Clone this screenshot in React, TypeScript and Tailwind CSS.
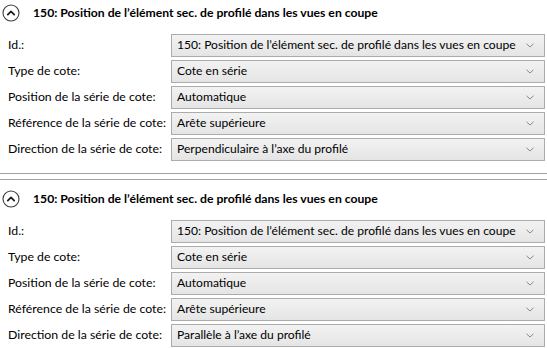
import React from 'react';

type Row = { label: string; value: string };

const makeRows = (direction: string): Row[] => [
  { label: 'Id.:', value: '150: Position de l’élément sec. de profilé dans les vues en coupe' },
  { label: 'Type de cote:', value: 'Cote en série' },
  { label: 'Position de la série de cote:', value: 'Automatique' },
  { label: 'Référence de la série de cote:', value: 'Arête supérieure' },
  { label: 'Direction de la série de cote:', value: direction },
];

const sections = [
  { title: '150: Position de l’élément sec. de profilé dans les vues en coupe', rows: makeRows('Perpendiculaire à l’axe du profilé') },
  { title: '150: Position de l’élément sec. de profilé dans les vues en coupe', rows: makeRows('Parallèle à l’axe du profilé') },
];

const CollapseIcon = () => (
  <svg width="18" height="18" viewBox="0 0 18 18" className="shrink-0">
    <circle cx="9" cy="9" r="8" fill="none" stroke="#3c3c3c" strokeWidth="1.1" />
    <polyline points="5.8,10.6 9,7.4 12.2,10.6" fill="none" stroke="#1e1e1e" strokeWidth="1.8" strokeLinecap="round" strokeLinejoin="round" />
  </svg>
);

const Chevron = () => (
  <svg width="8" height="5" viewBox="0 0 8 5" className="shrink-0">
    <polyline points="0.5,0.8 4,4 7.5,0.8" fill="none" stroke="#8a8a8a" strokeWidth="1" />
  </svg>
);

const ComboBox = ({ value }: { value: string }) => (
  <div className="h-[23px] min-w-0 flex items-center justify-between border border-[#acacac] bg-gradient-to-b from-[#f2f2f2] to-[#e5e5e5] pl-[5px] pr-[10px] text-[12.1px]">
    <span className="whitespace-nowrap">{value}</span>
    <Chevron />
  </div>
);

const Section = ({ title, rows, first }: { title: string; rows: Row[]; first?: boolean }) => (
  <section className={first ? 'border-b border-[#a0a0a0] pb-[12px]' : 'border-t border-[#a0a0a0] pt-[6px] mt-[5px]'}>
    <div className="h-[26px] flex items-center pl-[2px] gap-[13px]">
      <CollapseIcon />
      <span className="font-bold text-[12.2px] whitespace-nowrap">{title}</span>
    </div>
    <div className="mt-[8px] flex flex-col gap-[3px] pr-[2px]">
      {rows.map((row) => (
        <div key={row.label} className="grid grid-cols-[171px_1fr] items-center">
          <span className="pl-[8px] whitespace-nowrap">{row.label}</span>
          <ComboBox value={row.value} />
        </div>
      ))}
    </div>
  </section>
);

export default function App() {
  return (
    <div className="w-[547px] h-[348px] overflow-hidden bg-white text-black text-[12.3px] leading-none" style={{ fontFamily: 'Lato, sans-serif' }}>
      {sections.map((s, i) => (
        <Section key={i} title={s.title} rows={s.rows} first={i === 0} />
      ))}
    </div>
  );
}
